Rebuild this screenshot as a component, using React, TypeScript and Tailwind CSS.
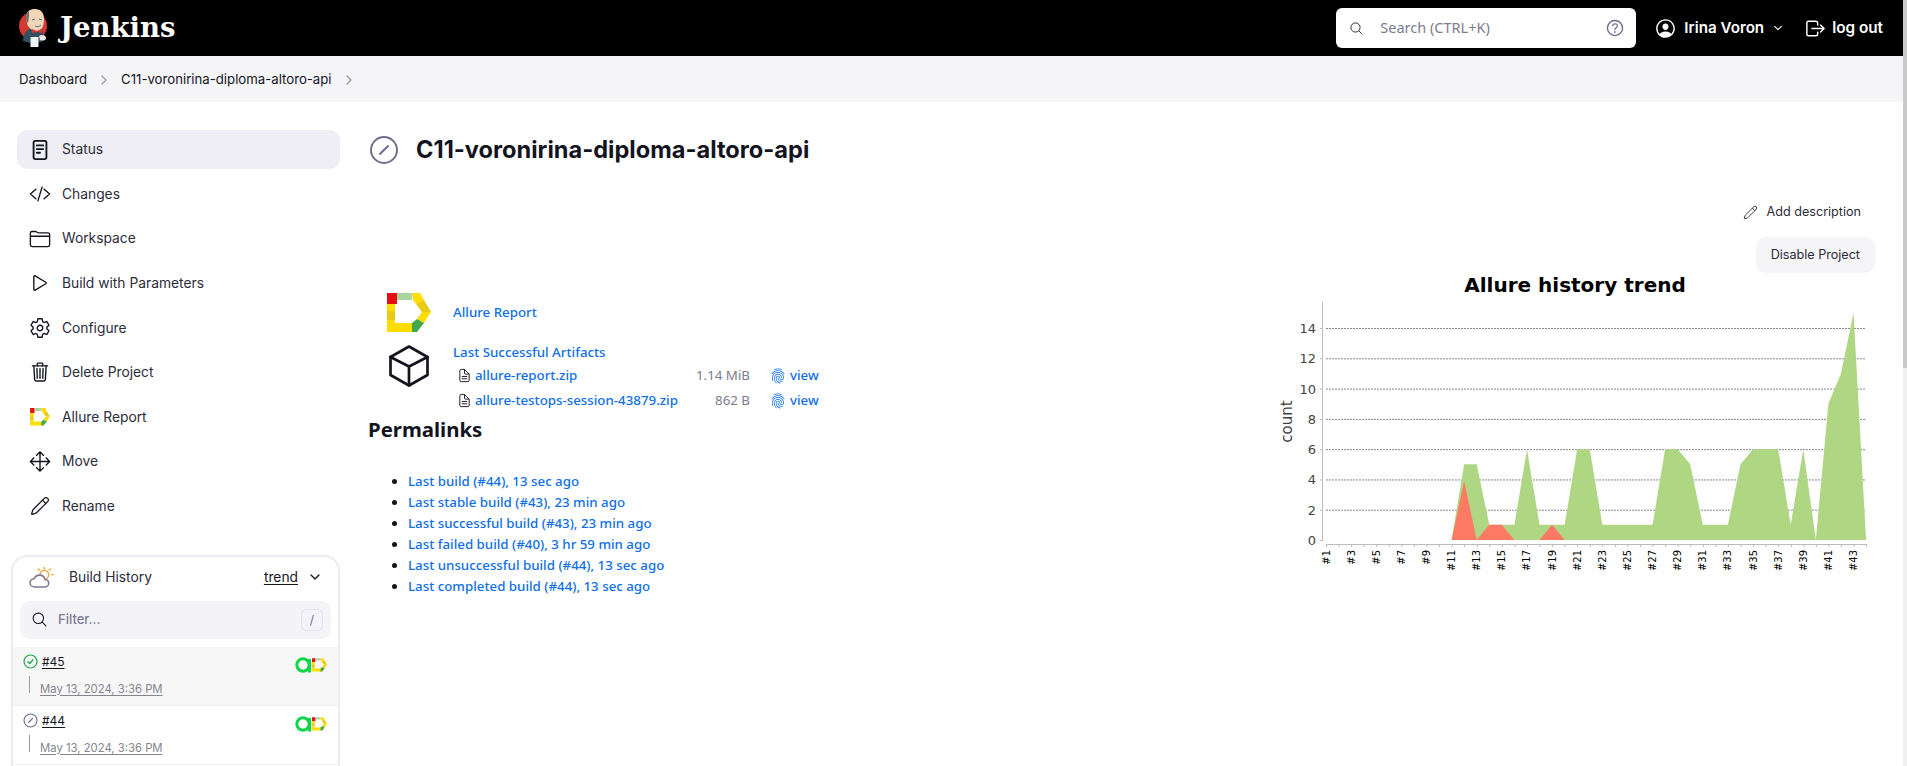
import React from 'react';
import { Pencil } from 'lucide-react';
import {
  IoChevronDown,
  IoChevronForward,
  IoCodeSlashOutline,
  IoDocumentTextOutline,
  IoFingerPrintOutline,
  IoFolderOutline,
  IoHelpCircleOutline,
  IoLogOutOutline,
  IoMoveOutline,
  IoPersonCircleOutline,
  IoPlayOutline,
  IoSearchOutline,
  IoSettingsOutline,
  IoTrashOutline,
} from 'react-icons/io5';

// Allure "D" mark, drawn on a 44x40 box
const AllureLogo = ({ className }: { className: string }) => (
  <svg viewBox="0 0 44 40" className={className}>
    <polygon points="0,11 8,11 8,18 0,18" fill="#ffdd00" />
    <polygon points="0,18 8,18 8,27 0,27" fill="#e6cb10" />
    <polygon points="0,27 8,27 8,30 27,30 30,39 0,39" fill="#ffdd00" />
    <polygon points="0,0 10,0 10,11 0,11" fill="#e60f14" />
    <polygon points="10,0 25,0 25,7 10,7" fill="#a9d6a0" />
    <polygon points="25,0 33,0 37,7 29,11 26,7" fill="#ffdd00" />
    <polygon points="29,11 37,7 44,19 35,19" fill="#e6cb10" />
    <polygon points="35,19 44,19 37,30 30,26" fill="#ffdd00" />
    <polygon points="30,26 37,30 30,39 25,39 25,30" fill="#43a84a" />
  </svg>
);

// Jenkins butler
const JenkinsLogo = () => (
  <svg viewBox="0 0 30 40" className="w-[30px] h-[40px]">
    <circle cx="15" cy="18" r="14" fill="#d33833" />
    <path d="M5 33 C5 26 9 21 14 20 L24 22 C26 26 25 31 24 34 L12 35 Z" fill="#335061" />
    <path d="M8 10 C8 3 12 1 17 1 C23 1 26 5 26 11 C26 16 25 21 20 23 C15 24 10 20 9 15 Z" fill="#f0d6b7" />
    <path d="M8 10 C8 6 9 4 11 3 C11 7 11 11 10 15 C9 14 8 12 8 10 Z" fill="#6d6b6d" />
    <path d="M14 12 L17 11 M21 11 L24 12 M17 18 C19 19 21 19 23 17" stroke="#49728b" strokeWidth="1" fill="none" />
    <path d="M14 21 L19 23 L24 21 L24 25 L19 24 L14 25 Z" fill="#d33833" />
    <rect x="12.5" y="29" width="8" height="10" fill="#f4f4f4" />
    <path d="M21 28 C24 26 28 27 28 30 C28 33 24 33 22 32 Z" fill="#e8e8e8" />
  </svg>
);

const StatusIcon = () => (
  <svg viewBox="0 0 20 24" className="w-[20px] h-[22px] text-[#14141f]" fill="none" stroke="currentColor" strokeWidth="2" strokeLinecap="round">
    <rect x="3" y="2" width="14" height="20" rx="2" />
    <path d="M6.5 7 H13.5 M6.5 11 H13.5 M6.5 15 H10" />
  </svg>
);

const CubeIcon = () => (
  <svg viewBox="0 0 40 42" className="w-[40px] h-[42px]" fill="none" stroke="#14141f" strokeWidth="2.7" strokeLinejoin="round" strokeLinecap="round">
    <path d="M20 1.5 L38.5 12 V30 L20 40.5 L1.5 30 V12 Z" />
    <path d="M1.5 12 L20 21.5 L38.5 12 M20 21.5 V40.5" />
  </svg>
);

const NotBuiltIcon = ({ className, width }: { className: string; width: number }) => (
  <svg viewBox="0 0 30 30" className={className} fill="none" stroke="#6d6b8d" strokeWidth={width} strokeLinecap="round">
    <circle cx="15" cy="15" r="13" />
    <path d="M11 19 L19 11" />
  </svg>
);

const PassedIcon = () => (
  <svg viewBox="0 0 30 30" className="w-[15px] h-[15px]" fill="none" stroke="#1ea64a" strokeWidth="2.4" strokeLinecap="round" strokeLinejoin="round">
    <circle cx="15" cy="15" r="13" />
    <path d="M10 15.5 L13.5 19 L20 11.5" />
  </svg>
);

const WeatherIcon = () => (
  <svg viewBox="0 0 26 22" className="w-[25px] h-[21px]" fill="none" strokeLinecap="round">
    <circle cx="16" cy="8" r="4.5" fill="#fff" stroke="#f2a93b" strokeWidth="1.5" />
    <path d="M16 0.5 V2 M9.5 2 L10.8 3.2 M22.5 2 L21.2 3.2 M24 8 H25.5" stroke="#f2a93b" strokeWidth="1.5" />
    <path d="M6 21 C3 21 1 19 1 16.5 C1 14 3 12.2 5.5 12.2 C6.5 9.5 9 8.5 11 8.5 C14 8.5 16 10.5 16.5 13 C19 13 20.5 14.8 20.5 17 C20.5 19.5 18.5 21 16.5 21 Z" fill="#fff" stroke="#7a7a96" strokeWidth="1.6" />
  </svg>
);

const AllureBadge = () => (
  <div className="flex items-center">
    <svg viewBox="0 0 17 16" className="w-[17px] h-[16px]" fill="none" stroke="#0bd748" strokeWidth="3">
      <circle cx="8" cy="8" r="6.2" />
      <path d="M14.5 2 V15.5" />
    </svg>
    <AllureLogo className="w-[15px] h-[14px]" />
  </div>
);

const navItems = [
  { label: 'Status', icon: <StatusIcon />, active: true },
  { label: 'Changes', icon: <IoCodeSlashOutline size={22} /> },
  { label: 'Workspace', icon: <IoFolderOutline size={22} /> },
  { label: 'Build with Parameters', icon: <IoPlayOutline size={22} /> },
  { label: 'Configure', icon: <IoSettingsOutline size={22} /> },
  { label: 'Delete Project', icon: <IoTrashOutline size={22} /> },
  { label: 'Allure Report', icon: <AllureLogo className="w-[20px] h-[18px]" /> },
  { label: 'Move', icon: <IoMoveOutline size={23} /> },
  { label: 'Rename', icon: <Pencil size={20} strokeWidth={1.5} /> },
];

const builds = [
  { id: '#45', date: 'May 13, 2024, 3:36 PM', passed: true },
  { id: '#44', date: 'May 13, 2024, 3:36 PM', passed: false },
];

const artifacts = [
  { name: 'allure-report.zip', size: '1.14 MiB' },
  { name: 'allure-testops-session-43879.zip', size: '862 B' },
];

const permalinks = [
  'Last build (#44), 13 sec ago',
  'Last stable build (#43), 23 min ago',
  'Last successful build (#43), 23 min ago',
  'Last failed build (#40), 3 hr 59 min ago',
  'Last unsuccessful build (#44), 13 sec ago',
  'Last completed build (#44), 13 sec ago',
];

// Totals per build, failed ones are drawn over the top
const total = [0, 0, 0, 0, 0, 0, 0, 0, 0, 0, 0, 5, 5, 1, 1, 1, 6, 1, 1, 1, 6, 6, 1, 1, 1, 1, 1, 6, 6, 5, 1, 1, 1, 5, 6, 6, 6, 1, 6, 0, 9, 11, 15, 0];
const failed = [0, 0, 0, 0, 0, 0, 0, 0, 0, 0, 0, 3.9, 0, 1, 1, 0, 0, 0, 1, 0];

const xAt = (i: number) => 1326 + i * 12.56;
const yAt = (v: number) => 540 - v * 15.14;
const area = (data: number[]) =>
  `${xAt(0)},540 ` + data.map((v, i) => `${xAt(i)},${yAt(v)}`).join(' ') + ` ${xAt(data.length - 1)},540`;

const TrendChart = () => (
  <svg viewBox="1275 272 600 310" width={600} height={310} className="block mt-[-1px]">
    <text x={1575} y={292} textAnchor="middle" fontFamily="DejaVu Sans" fontWeight="700" fontSize={20} fill="#000">
      Allure history trend
    </text>
    {[2, 4, 6, 8, 10, 12, 14].map((v) => (
      <line key={v} x1={1326} x2={1865} y1={yAt(v) + 0.5} y2={yAt(v) + 0.5} stroke="#888" strokeDasharray="2 1" />
    ))}
    <polygon points={area(total)} fill="#aed683" />
    <polygon points={area(failed)} fill="#ff7a65" />
    <line x1={1322.5} x2={1322.5} y1={302} y2={541} stroke="#bbb" />
    <line x1={1326} x2={1867} y1={544.5} y2={544.5} stroke="#bbb" />
    {[0, 2, 4, 6, 8, 10, 12, 14].map((v) => (
      <g key={v}>
        <line x1={1320} x2={1322} y1={yAt(v) + 0.5} y2={yAt(v) + 0.5} stroke="#bbb" />
        <text x={1316} y={yAt(v) + 5} textAnchor="end" fontFamily="DejaVu Sans" fontSize={13} fill="#444">
          {v}
        </text>
      </g>
    ))}
    <text transform="translate(1292 421.5) rotate(-90)" textAnchor="middle" fontFamily="DejaVu Sans" fontSize={15} fill="#444">
      count
    </text>
    {total.map((_, i) => (
      <g key={i}>
        <line x1={xAt(i) + 0.5} x2={xAt(i) + 0.5} y1={545} y2={547} stroke="#bbb" />
        {i % 2 === 0 && (
          <text transform={`translate(${xAt(i) + 3.5} 550) rotate(-90)`} textAnchor="end" fontFamily="DejaVu Sans" fontSize={10} fill="#000">
            {`#${i + 1}`}
          </text>
        )}
      </g>
    ))}
  </svg>
);

export default function App() {
  return (
    <div className="flex h-[766px] overflow-hidden bg-white font-['Inter',sans-serif] text-[#14141f]">
      <div className="flex-1 min-w-0 flex flex-col">
        {/* Header */}
        <header className="h-[56px] bg-black flex items-center text-white shrink-0">
          <div className="ml-[18px] flex items-center">
            <JenkinsLogo />
            <span className="ml-[12px] font-['DejaVu_Serif',serif] font-bold text-[27.5px] leading-none">Jenkins</span>
          </div>
          <div className="ml-auto flex items-center">
            <div className="w-[300px] h-[40px] bg-white rounded-[6px] flex items-center pl-[13px] pr-[10px] text-[#7c7c8f]">
              <IoSearchOutline size={15} className="text-[#222]" />
              <span className="ml-[16px] text-[14.5px] font-['Noto_Sans',sans-serif]">Search (CTRL+K)</span>
              <IoHelpCircleOutline size={22} className="ml-auto text-[#6d6b8d]" />
            </div>
            <IoPersonCircleOutline size={23} className="ml-[18px]" />
            <span className="ml-[7px] text-[15.2px] font-semibold">Irina Voron</span>
            <IoChevronDown size={12} className="ml-[8px]" />
            <IoLogOutOutline size={23} className="ml-[20px]" />
            <span className="ml-[5px] mr-[20px] text-[15.3px] font-semibold">log out</span>
          </div>
        </header>

        {/* Breadcrumbs */}
        <nav className="h-[46px] bg-[#f5f5f8] flex items-center pl-[19px] pt-[1px] text-[13.2px] shrink-0">
          <span>Dashboard</span>
          <IoChevronForward size={14} className="mx-[10px] text-[#9a9aac]" />
          <span>C11-voronirina-diploma-altoro-api</span>
          <IoChevronForward size={14} className="mx-[10px] text-[#9a9aac]" />
        </nav>

        <div className="flex-1 min-h-0 flex">
          {/* Sidebar */}
          <aside className="w-[329px] shrink-0 ml-[11px] pt-[28px]">
            <div className="flex flex-col gap-[5.6px] ml-[6px]">
              {navItems.map((item) => (
                <div
                  key={item.label}
                  className={`h-[39px] rounded-[10px] flex items-center pl-[12px] text-[13.8px] text-[#2c2c3a] ${item.active ? 'bg-[#eeeef4]' : ''}`}
                >
                  <span className="w-[22px] flex justify-center text-[#14141f]">{item.icon}</span>
                  <span className="ml-[11px]">{item.label}</span>
                </div>
              ))}
            </div>

            <section className="mt-[29px] w-[329px] h-[240px] border-2 border-[#ebebf3] rounded-[16px] overflow-hidden">
              <div className="h-[44px] flex items-center pl-[16px] pr-[16px] pb-[3px]">
                <WeatherIcon />
                <span className="ml-[15px] text-[13.8px] text-[#2c2c3a]">Build History</span>
                <span className="ml-auto text-[13.8px] underline underline-offset-2">trend</span>
                <IoChevronDown size={14} className="ml-[10px]" />
              </div>
              <div className="mx-[7px] h-[38px] bg-[#f3f3f8] rounded-[10px] flex items-center pl-[11px] pr-[8px]">
                <IoSearchOutline size={17} />
                <span className="ml-[10px] text-[13px] font-medium text-[#7c7c95]">Filter...</span>
                <span className="ml-auto w-[22px] h-[22px] border border-[#e2e2ea] rounded-[5px] flex items-center justify-center text-[12px] text-[#6d6b8d]">/</span>
              </div>
              <div className="mt-[8px]">
                {builds.map((build) => (
                  <div
                    key={build.id}
                    className={`h-[59px] border-b border-[#efeff2] pl-[10px] pr-[11px] pt-[7px] ${build.passed ? 'bg-[#f7f7f7]' : ''}`}
                  >
                    <div className="flex items-start">
                      <span>
                        {build.passed ? <PassedIcon /> : <NotBuiltIcon className="w-[15px] h-[15px]" width={2.2} />}
                      </span>
                      <span className="ml-[4px] text-[12px] leading-[15px] underline underline-offset-2">{build.id}</span>
                      <span className="ml-auto mt-[3px]"><AllureBadge /></span>
                    </div>
                    <div className="mt-[3px] ml-[6px] border-l border-[#9a9aa8] pl-[10px] h-[17px] flex items-end">
                      <span className="text-[11.3px] leading-[15px] text-[#85858f] underline underline-offset-2 translate-y-[4px]">{build.date}</span>
                    </div>
                  </div>
                ))}
              </div>
            </section>
          </aside>

          {/* Main content */}
          <main className="flex-1 min-w-0 ml-[28px] pr-[28px] pt-[28px]">
            <div className="h-[40px] flex items-center">
              <NotBuiltIcon className="ml-[1px] w-[30px] h-[30px]" width={1.9} />
              <h1 className="ml-[17px] text-[23.6px] font-bold text-[#14141f]">C11-voronirina-diploma-altoro-api</h1>
            </div>
            <div className="flex justify-between">
              <div className="pt-[123px] font-['Noto_Sans',sans-serif] text-[13.3px] font-medium text-[#0f6fe8]">
                <div className="flex items-center ml-[19px] h-[40px]">
                  <AllureLogo className="w-[44px] h-[40px]" />
                  <span className="ml-[22px]">Allure Report</span>
                </div>
                <div className="flex ml-[21px] mt-[12px]">
                  <CubeIcon />
                  <div className="ml-[24px] mt-[-3px]">
                    <div className="h-[21px] leading-[20px]">Last Successful Artifacts</div>
                    {artifacts.map((file) => (
                      <div key={file.name} className="h-[25px] flex items-center whitespace-nowrap">
                        <IoDocumentTextOutline size={15} className="ml-[4px] text-[#14141f]" />
                        <span className="ml-[3px] w-[190px]">{file.name}</span>
                        <span className="w-[85px] text-right font-normal text-[#7c7c8f]">{file.size}</span>
                        <IoFingerPrintOutline size={16} className="ml-[20px]" />
                        <span className="ml-[4px]">view</span>
                      </div>
                    ))}
                  </div>
                </div>
                <h2 className="text-[20.4px] leading-[28px] mt-[2px] font-bold text-[#14141f]">Permalinks</h2>
                <ul className="list-disc ml-[40px] mt-[28px] marker:text-[#14141f]">
                  {permalinks.map((link) => (
                    <li key={link} className="h-[21px] leading-[21px]">{link}</li>
                  ))}
                </ul>
              </div>
              <div className="flex flex-col items-end">
                <div className="h-[32px] mt-[26px] flex items-center text-[12.6px] text-[#2c2c3a] pr-[14px]">
                  <Pencil size={15} strokeWidth={1.5} />
                  <span className="ml-[9px]">Add description</span>
                </div>
                <div className="h-[36px] mt-[9px] px-[15px] bg-[#f5f5f8] rounded-[10px] flex items-center text-[12.6px] text-[#2c2c3a]">Disable Project</div>
                <TrendChart />
              </div>
            </div>
          </main>
        </div>
      </div>

      {/* Page scrollbar */}
      <div className="w-[4px] shrink-0 flex flex-col">
        <div className="h-[368px] bg-[#c9c9c9]" />
        <div className="flex-1 bg-[#f0f0f0]" />
      </div>
    </div>
  );
}
